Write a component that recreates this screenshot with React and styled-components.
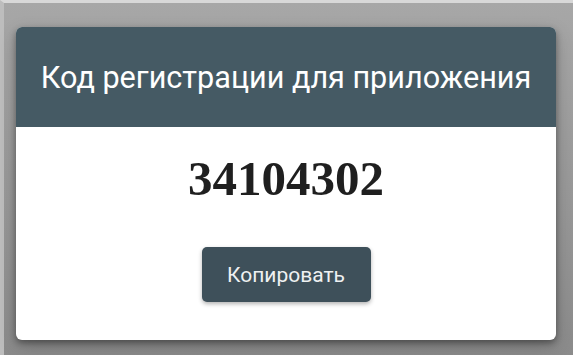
import React from 'react'
import styled, { createGlobalStyle } from 'styled-components'

const Global = createGlobalStyle`
  html, body {
    margin: 0;
    padding: 0;
    width: 573px;
    height: 355px;
    overflow: hidden;
  }
  #root {
    height: 100%;
  }
`

const Backdrop = styled.div`
  box-sizing: border-box;
  width: 573px;
  height: 355px;
  padding: 24px 17px 0 12px;
  background: linear-gradient(180deg, #a7a7a7 0%, #979797 60%, #8b8b8b 100%);
  border-top: 3px solid #d8d8d8;
  border-left: 4px solid #bdbdbd;
`

const Dialog = styled.div`
  width: 540px;
  height: 313px;
  background: #fff;
  border-radius: 6px;
  overflow: hidden;
  display: flex;
  flex-direction: column;
  box-shadow: 0 3px 6px rgba(0, 0, 0, 0.35), 0 6px 18px rgba(0, 0, 0, 0.2);
`

const Header = styled.div`
  height: 100px;
  flex: none;
  background: #455a64;
  display: flex;
  align-items: center;
  justify-content: center;
  color: #fff;
  font-family: Roboto, "Liberation Sans", sans-serif;
  font-size: 30.6px;
  padding-top: 1px;
  box-sizing: border-box;
`

const Body = styled.div`
  flex: 1;
  display: flex;
  flex-direction: column;
  align-items: center;
  padding-top: 24px;
`

const Code = styled.div`
  font-family: "Liberation Serif", "Times New Roman", serif;
  font-weight: bold;
  font-size: 49px;
  line-height: 56px;
  color: #1f1f1f;
`

const Button = styled.button`
  margin-top: 40px;
  width: 169px;
  height: 55px;
  border: none;
  border-radius: 5px;
  background: #3e505a;
  color: #eef1f2;
  font-family: Roboto, "Liberation Sans", sans-serif;
  font-size: 21px;
  box-shadow: 0 2px 4px rgba(0, 0, 0, 0.3);
  cursor: pointer;
`

export default function App() {
  return (
    <>
      <Global />
      <Backdrop>
        <Dialog>
          <Header>Код регистрации для приложения</Header>
          <Body>
            <Code>34104302</Code>
            <Button>Копировать</Button>
          </Body>
        </Dialog>
      </Backdrop>
    </>
  )
}
